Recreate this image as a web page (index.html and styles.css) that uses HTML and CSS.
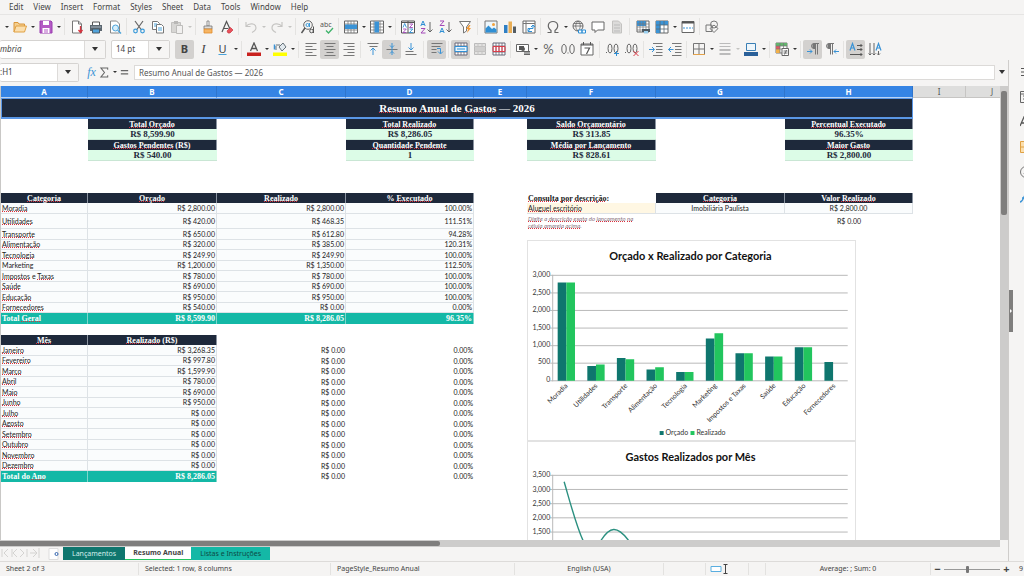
FILE: index.html
```html
<!DOCTYPE html>
<html lang="pt-BR">
<head>
<meta charset="utf-8">
<title>Resumo Anual de Gastos</title>
<link rel="stylesheet" href="styles.css">
</head>
<body>
<div class="app">
  <nav class="menubar">
    <button>Edit</button><button>View</button><button>Insert</button><button>Format</button><button>Styles</button><button>Sheet</button><button>Data</button><button>Tools</button><button>Window</button><button>Help</button>
  </nav>

  <div class="toolbar">
    <button class="dd" aria-label="New options"></button>
    <button class="tb" aria-label="Open"><svg viewBox="0 0 14 14"><path d="M1 12V2.500h4l1 1.500h5.500V6" fill="#f5cf8e" stroke="#d9963a"/><path d="M1 12l2-6h10.500l-2 6z" fill="#fbdfae" stroke="#e0a144"/></svg></button>
    <button class="dd" aria-label="Open options"></button>
    <button class="tb" aria-label="Save"><svg viewBox="0 0 14 14"><path d="M1 1h11l1 1v11H1z" fill="#b45bc4" stroke="#9a3fb0"/><path d="M4 1h6v4H4zM3.500 8h7v5h-7z" fill="#fff"/><path d="M5 10h4M5 12h4" stroke="#b45bc4"/></svg></button>
    <button class="dd" aria-label="Save options"></button><i class="sep"></i>
    <button class="tb" aria-label="Export as PDF"><svg viewBox="0 0 14 14"><path d="M2.500 1h6l3 3v9h-9z" fill="#fff" stroke="#777"/><path d="M8.500 1v3h3" fill="none" stroke="#777"/><path d="M10.500 6v6M8.500 10l2 2.500 2-2.500" fill="none" stroke="#d8333f" stroke-width="1.300"/></svg></button>
    <button class="tb" aria-label="Print"><svg viewBox="0 0 14 14"><path d="M3.500 5V2h7v3" fill="#fff" stroke="#555"/><path d="M1 5h12v6H1z" fill="#5c6770"/><path d="M2 7h10" stroke="#a9b6c0"/><path d="M3.500 9h7v4h-7z" fill="#52a4dc" stroke="#4d5a63"/></svg></button>
    <button class="tb" aria-label="Print Preview"><svg viewBox="0 0 14 14"><path d="M2.500 1h6l3 3v9h-9z" fill="#fff" stroke="#888"/><circle cx="7.500" cy="8" r="3" fill="#d8effb" stroke="#4ba3da"/><path d="M10 10.500l3 3" stroke="#4ba3da" stroke-width="1.400"/></svg></button><i class="sep"></i>
    <button class="tb" aria-label="Cut"><svg viewBox="0 0 14 14" fill="none"><path d="M3 1l6.500 9M11 1L4.500 10" stroke="#666" stroke-width="1.200"/><circle cx="3.500" cy="11" r="1.800" stroke="#3a9ad9" stroke-width="1.200"/><circle cx="10.500" cy="11" r="1.800" stroke="#3a9ad9" stroke-width="1.200"/></svg></button>
    <button class="tb" aria-label="Copy"><svg viewBox="0 0 14 14"><path d="M1.500 1.500h5l2 2v6h-7z" fill="#fff" stroke="#777"/><path d="M5.500 4.500h5l2 2v6.500h-7z" fill="#fff" stroke="#777"/><path d="M3 4h3M3 6h2M7 8h4M7 10h4" stroke="#4ba3da"/></svg></button>
    <button class="tb" aria-label="Paste"><svg viewBox="0 0 14 14"><path d="M1.500 2.500h9v10h-9z" fill="#d7d6d4" stroke="#c2c1bf"/><path d="M4 1h4v3H4z" fill="#b9b8b6"/><path d="M6.500 5.500h6v8h-6z" fill="#f1f0ef" stroke="#bdbcba"/></svg></button>
    <button class="dd off" aria-label="Paste options"></button><i class="sep"></i>
    <button class="tb" aria-label="Clone Formatting"><svg viewBox="0 0 14 14"><path d="M6 1h2v5H6z" fill="#fff" stroke="#777" stroke-width=".8"/><path d="M3 6h8v3H3z" fill="#ddd" stroke="#777" stroke-width=".8"/><path d="M3 9h8v4H3z" fill="#f6b564" stroke="#e08a2a" stroke-width=".8"/></svg></button>
    <button class="tb" aria-label="Clear Direct Formatting"><svg viewBox="0 0 14 14" fill="none"><path d="M2 12L6.500 1.500 10 9M3.500 8.500h5" stroke="#555" stroke-width="1.200"/><path d="M7 11l3.500-3.500L13 10l-3 3H8z" fill="#e8505b" stroke="#c8333e" stroke-width=".7"/></svg></button><i class="sep"></i>
    <button class="tb" aria-label="Undo"><svg viewBox="0 0 14 14" fill="none" stroke="#c6c5c3" stroke-width="1.200"><path d="M2 2v4.500h4.500M2 6.500C5 2.500 12 3 12 8c0 2.500-2 3.500-4 4.500"/></svg></button>
    <button class="dd off" aria-label="Undo options"></button>
    <button class="tb" aria-label="Redo"><svg viewBox="0 0 14 14" fill="none" stroke="#c6c5c3" stroke-width="1.200"><path d="M12 2v4.500H7.500M12 6.500C9 2.500 2 3 2 8c0 2.500 2 3.500 4 4.500"/></svg></button>
    <button class="dd off" aria-label="Redo options"></button><i class="sep"></i>
    <button class="tb" aria-label="Find and Replace"><svg viewBox="0 0 14 14" fill="none"><circle cx="7" cy="5" r="4.300" stroke="#666"/><path d="M4 8l-3.500 5" stroke="#555" stroke-width="1.500"/><circle cx="6.500" cy="5" r="1.500" stroke="#3a9ad9"/><path d="M8.500 3v4" stroke="#3a9ad9"/><circle cx="10.500" cy="11" r="1.800" stroke="#555"/><path d="M12.500 6.500v6.500" stroke="#555"/></svg></button>
    <button class="tb" aria-label="Spelling"><svg viewBox="0 0 14 14" fill="none"><text x="0" y="7" font-size="7" fill="#555">abc</text><path d="M6 10.500l2.500 2.500L13 8" stroke="#3fb36b" stroke-width="1.300"/></svg></button><i class="sep"></i>
    <button class="tb" aria-label="Row"><svg viewBox="0 0 14 14"><path d="M.5 1h13v12H.5z" fill="#fff" stroke="#666"/><path d="M.5 4h13M.5 10h13M4 1v12M7 1v12M10 1v12" stroke="#777" stroke-width=".8"/><path d="M1 4.500h12v4.500H1z" fill="#3a93d6"/></svg></button>
    <button class="dd" aria-label="Row options"></button>
    <button class="tb" aria-label="Column"><svg viewBox="0 0 14 14"><path d="M.5 1h13v12H.5z" fill="#fff" stroke="#666"/><path d="M.5 4h13M.5 7h13M.5 10h13M4 1v12M10 1v12" stroke="#777" stroke-width=".8"/><path d="M4.500 1.500h4.500v11H4.500z" fill="#3a93d6"/></svg></button>
    <button class="dd" aria-label="Column options"></button><i class="sep"></i>
    <button class="tb" aria-label="Sort"><svg viewBox="0 0 14 14" fill="none"><path d="M.5 1h13v12H.5zM7 1v12M.5 2.500h13" fill="#fff" stroke="#555"/><path d="M2 7.500l1.700-4 1.700 4M8.500 9h3.300L8.500 12.500h3.300" stroke="#2f8fd4" stroke-width=".9"/><path d="M2 9h3.300L2 12.500h3.300M8.500 4h3.300L8.500 7.500h3.300" stroke="#a347b8" stroke-width=".9"/></svg></button>
    <button class="tb" aria-label="Sort Ascending"><svg viewBox="0 0 14 14" fill="none"><path d="M.8 6L3 1l2.200 5M1.500 4.500h3" stroke="#2f8fd4"/><path d="M1 8.500h4l-4 4.500h4.500" stroke="#a347b8"/><path d="M10 2v10M7.500 9.500L10 12l2.500-2.500" stroke="#666"/></svg></button>
    <button class="tb" aria-label="Sort Descending"><svg viewBox="0 0 14 14" fill="none"><path d="M1 1h4L1 5.500h4.500" stroke="#a347b8"/><path d="M.8 13L3 8l2.200 5M1.500 11.500h3" stroke="#2f8fd4"/><path d="M10 2v10M7.500 9.500L10 12l2.500-2.500" stroke="#666"/></svg></button>
    <button class="tb" aria-label="AutoFilter"><svg viewBox="0 0 14 14"><path d="M1.500 1.500h11L8.500 7v4l-3 2V7z" fill="#fff" stroke="#777"/><path d="M11 5l-3 4h2l-1 4 4-5h-2l1.500-3z" fill="#f29a38"/></svg></button><i class="sep wide"></i>
    <button class="tb" aria-label="Insert Image"><svg viewBox="0 0 14 14"><path d="M1 1h12v12H1z" fill="#eef7fc" stroke="#777"/><circle cx="9.500" cy="4.500" r="1.500" fill="#f2a13c"/><path d="M1.500 12.500v-4l3-3 3.500 3.500 2-1.500 2.500 2v3z" fill="#2f8fd4"/></svg></button>
    <button class="tb" aria-label="Insert Chart"><svg viewBox="0 0 14 14"><path d="M1 5h3.500v8H1z" fill="#2f7fc4"/><path d="M5.500 1.500H9V13H5.500z" fill="#e9ae55"/><path d="M10 6.500h3V13h-3z" fill="#555d63"/></svg></button>
    <button class="tb" aria-label="Insert Pivot Table"><svg viewBox="0 0 14 14" fill="none"><path d="M1 1h12v12H1z" fill="#fff" stroke="#666"/><path d="M1 3.500h12M4 1v12" stroke="#777"/><path d="M6 11V8.500h5V5.500M9 7l2-2 2 2M8 9l-2 2.500h4" stroke="#2f8fd4"/></svg></button><i class="sep"></i>
    <button class="tb" aria-label="Special Character"><svg viewBox="0 0 14 14" fill="none" stroke="#666" stroke-width="1.200"><path d="M1.500 12.500h3.500v-2C.5 7 2 1.500 7 1.500s6.500 5.500 2 9v2h3.500"/></svg></button>
    <button class="dd" aria-label="Special Character options"></button>
    <button class="tb" aria-label="Hyperlink"><svg viewBox="0 0 14 14" fill="none"><circle cx="6" cy="6" r="5" stroke="#666"/><path d="M1 6h10M6 1C3 4 3 8 6 11M6 1c3 3 3 7 0 10M2 3.500h8" stroke="#666" stroke-width=".8"/><path d="M6.500 10h3.500v3H6.500zM10 10h3.500v3H10z" fill="#fff" stroke="#2f8fd4"/></svg></button>
    <button class="tb" aria-label="Insert Comment"><svg viewBox="0 0 14 14"><path d="M1 2h12v8H6.500L4 12.500V10H1z" fill="#fff" stroke="#666"/></svg></button>
    <button class="tb" aria-label="Headers and Footers"><svg viewBox="0 0 14 14"><path d="M2.500 1h6l3 3v9h-9z" fill="#dcdbda" stroke="#c3c2c0"/><path d="M4 5h6M4 8h6M4 11h6" stroke="#bbb"/></svg></button><i class="sep wide"></i>
    <button class="tb" aria-label="Define Print Area"><svg viewBox="0 0 14 14"><path d="M1 1h12v11H1z" fill="#fff" stroke="#666"/><path d="M1 1h9v5H1z" fill="#3a93d6"/><path d="M1 4h12M1 7h12M1 10h12M4 1v11M7 1v11M10 1v11" stroke="#777" stroke-width=".7"/><path d="M6 9h8v3H6z" fill="#4d5a63"/><path d="M8 11h4v2.500H8z" fill="#9bd0ef"/></svg></button>
    <button class="tb" aria-label="Freeze Rows and Columns"><svg viewBox="0 0 14 14"><path d="M1 1h12v12H1z" fill="#fff" stroke="#666"/><path d="M1 1h12v4H1zM1 1h4.500v12H1z" fill="#3a93d6"/><path d="M1 5h12M1 9h12M5 1v12M9 1v12" stroke="#5a6a75" stroke-width=".8"/></svg></button>
    <button class="dd" aria-label="Freeze options"></button>
    <button class="tb" aria-label="Split Window"><svg viewBox="0 0 14 14"><path d="M1 1.500h12v11H1z" fill="#fff" stroke="#666"/><path d="M1 2.500h12" stroke="#555" stroke-width="2"/><path d="M2 8h10" stroke="#3a93d6" stroke-dasharray="2 1"/></svg></button><i class="sep"></i>
    <button class="tb" aria-label="Show Draw Functions"><svg viewBox="0 0 14 14" fill="none" stroke="#777"><path d="M1 5h6v6.500H1z"/><circle cx="9" cy="4.500" r="3.500"/><path d="M9 5l4 3.500-4 4-4-4z"/></svg></button>
  </div>

  <div class="toolbar format">
    <div class="combo font"><input aria-label="Font Name" value="mbria" class="italic"><button aria-label="Font list"></button></div>
    <div class="combo size"><input aria-label="Font Size" value="14 pt"><button aria-label="Size list"></button></div>
    <button class="tb on" aria-label="Bold"><b class="glyph">B</b></button>
    <button class="tb" aria-label="Italic"><em class="glyph serif">I</em></button>
    <button class="tb" aria-label="Underline"><u class="glyph under">U</u></button>
    <button class="dd" aria-label="Underline options"></button><i class="sep"></i>
    <button class="tb" aria-label="Font Color"><svg viewBox="0 0 14 14"><path d="M3.500 9L7 1l3.500 8M5 6.500h4" fill="none" stroke="#555" stroke-width="1.300"/><path d="M0 10.500h14V14H0z" fill="#c9211e"/></svg></button>
    <button class="dd" aria-label="Font Color options"></button>
    <button class="tb" aria-label="Background Color"><svg viewBox="0 0 14 14"><path d="M3 4v4M3 3h4M10 1L6 5l3 4 4-4z" fill="#e2e9ee" stroke="#66727a"/><path d="M1.500 2.500v5" stroke="#3a93d6" stroke-width="1.500"/><path d="M0 10.500h14V14H0z" fill="#ffff00"/></svg></button>
    <button class="dd" aria-label="Background Color options"></button><i class="sep"></i>
    <button class="tb" aria-label="Align Left"><svg viewBox="0 0 14 14" stroke="#777"><path d="M1.500 1.500h11M1.500 4.500h7M1.500 7.500h11M1.500 10.500h7M1.500 13.500h11"/></svg></button>
    <button class="tb on" aria-label="Center"><svg viewBox="0 0 14 14" stroke="#777"><path d="M1.500 1.500h11M3.500 4.500h7M1.500 7.500h11M3.500 10.500h7M1.500 13.500h11"/></svg></button>
    <button class="tb" aria-label="Align Right"><svg viewBox="0 0 14 14" stroke="#777"><path d="M1.500 1.500h11M5.500 4.500h7M1.500 7.500h11M5.500 10.500h7M1.500 13.500h11"/></svg></button><i class="sep"></i>
    <button class="tb" aria-label="Align Top"><svg viewBox="0 0 14 14" fill="none" stroke="#777"><path d="M1.500 1.500h11M3.500 4.500h8"/><path d="M7 13V6M4.500 8.500L7 6l2.500 2.500" stroke="#3a93d6"/></svg></button>
    <button class="tb on" aria-label="Center Vertically"><svg viewBox="0 0 14 14" fill="none" stroke="#777"><path d="M1.500 7.500h11"/><path d="M7 1v12M5 3.500l2 2 2-2M5 11.500l2-2 2 2" stroke="#3a93d6"/></svg></button>
    <button class="tb" aria-label="Align Bottom"><svg viewBox="0 0 14 14" fill="none" stroke="#777"><path d="M1.500 12.500h11M1.500 9.500h8"/><path d="M7 1v7M4.500 5.500L7 8l2.500-2.500" stroke="#3a93d6"/></svg></button><i class="sep wide"></i>
    <button class="tb on" aria-label="Wrap Text"><svg viewBox="0 0 14 14" fill="none" stroke="#777"><path d="M1.500 1.500h11M1.500 4.500h9M1.500 7.500h5M1.500 10.500h5"/><path d="M7 6.500h3.500v5M8 9.500l2.500 2.500L13 9.500" stroke="#3a93d6"/></svg></button><i class="sep"></i>
    <button class="tb on" aria-label="Merge and Center Cells"><svg viewBox="0 0 14 14" fill="none"><path d="M1 1h12v12H1z" fill="#fff" stroke="#667"/><path d="M1 4h12M1 10h12M4 1v12M10 1v12M7 1v3M7 10v3" stroke="#667" stroke-width=".8"/><path d="M1 4.500h12v5H1z" fill="#eaf6fd" stroke="#2f8fd4"/><path d="M3 7h8" stroke="#2f8fd4"/></svg></button>
    <button class="tb" aria-label="Merge Cells"><svg viewBox="0 0 14 14" fill="none"><path d="M1.500 1.500h11v11h-11z" fill="#e2e1e0" stroke="#bbb"/><path d="M1 4.500h12M1 9.500h12M5 1v12M9 1v12" stroke="#c4c3c2"/><path d="M2 5h10v4H2z" fill="#d0cfce"/></svg></button>
    <button class="tb" aria-label="Unmerge Cells"><svg viewBox="0 0 14 14" fill="none"><path d="M1 1h12v12H1z" fill="#fff" stroke="#667"/><path d="M4 1v12M7 1v12M10 1v12M1 4h12M1 10h12" stroke="#667" stroke-width=".8"/><path d="M1 4.500h12v5H1zM4 4.500v5M7 4.500v5M10 4.500v5" stroke="#dc3c48"/></svg></button><i class="sep"></i>
    <button class="tb" aria-label="Format as Currency"><svg viewBox="0 0 14 14"><path d="M.5 2.500h12v7H.5z" fill="#fff" stroke="#666"/><path d="M3 4h5v4H3z" fill="#555"/><circle cx="7" cy="7" r="2" fill="#555"/><path d="M8 9h6v4H8z" fill="#666"/><path d="M8 11h6" stroke="#ddd"/></svg></button>
    <button class="dd" aria-label="Currency options"></button>
    <button class="tb" aria-label="Format as Percent"><span class="glyph num">%</span></button>
    <button class="tb" aria-label="Format as Number"><svg viewBox="0 0 14 14" fill="none" stroke="#666"><ellipse cx="3" cy="7" rx="2.200" ry="4.500"/><ellipse cx="11" cy="7" rx="2.200" ry="4.500"/><path d="M6.500 11h1"/></svg></button>
    <button class="tb" aria-label="Format as Date"><svg viewBox="0 0 14 14"><path d="M1 2h12v11H1z" fill="#fff" stroke="#666"/><path d="M1 3h12M3.500 0v3M10.500 0v3" stroke="#555"/><path d="M4.500 6h5L6.500 12" fill="none" stroke="#555" stroke-width="1.200"/></svg></button><i class="sep wide"></i>
    <button class="tb" aria-label="Add Decimal Place"><svg viewBox="0 0 14 14" fill="none" stroke="#666"><path d="M0 10.500h1"/><ellipse cx="4" cy="6.500" rx="2" ry="4.500"/><ellipse cx="10" cy="6.500" rx="2" ry="4.500"/><path d="M8 11.500h5M10.500 9v5" stroke="#2f8fd4"/></svg></button>
    <button class="tb" aria-label="Delete Decimal Place"><svg viewBox="0 0 14 14" fill="none" stroke="#666"><path d="M0 10.500h1"/><ellipse cx="4" cy="6.500" rx="2" ry="4.500"/><ellipse cx="10" cy="6.500" rx="2" ry="4.500"/><path d="M8.500 9l5 5M13.500 9l-5 5" stroke="#dc3c48"/></svg></button><i class="sep"></i>
    <button class="tb" aria-label="Increase Indent"><svg viewBox="0 0 14 14" fill="none" stroke="#777"><path d="M4 1.500h9.500M7 4.500h6.500M7 7.500h6.500M7 10.500h6.500M4 13.500h9.500"/><path d="M0 7.500h5M3 5l2.500 2.500L3 10" stroke="#3a93d6"/></svg></button>
    <button class="tb" aria-label="Decrease Indent"><svg viewBox="0 0 14 14" fill="none" stroke="#777"><path d="M4 1.500h9.500M7 4.500h6.500M7 7.500h6.500M7 10.500h6.500M4 13.500h9.500"/><path d="M.5 7.500h5M3 5L.5 7.500 3 10" stroke="#3a93d6"/></svg></button><i class="sep"></i>
    <button class="tb" aria-label="Borders"><svg viewBox="0 0 14 14" fill="none"><path d="M1.500 12.500v-11h11v11M7 1.500v11M1.500 7h11" stroke="#777"/><path d="M1 12.500h12" stroke="#e3a24a"/></svg></button>
    <button class="dd" aria-label="Borders options"></button>
    <button class="tb" aria-label="Border Style"><svg viewBox="0 0 14 14" stroke="#bbb"><path d="M1.500 1.500h11M1.500 4.500h11"/><path d="M1.500 8h11M1.500 12h11" stroke-width="2"/></svg></button>
    <button class="dd off" aria-label="Border Style options"></button>
    <button class="tb" aria-label="Border Color"><svg viewBox="0 0 14 14"><path d="M2.500 1.500h9v7h-9z" fill="#eef6fb" stroke="#3a7fb5"/><path d="M0 10h14v4H0z" fill="#2a6099"/></svg></button>
    <button class="dd" aria-label="Border Color options"></button><i class="sep"></i>
    <button class="tb" aria-label="Conditional"><svg viewBox="0 0 14 14"><path d="M1 1h11v10H1z" fill="#fff" stroke="#777"/><path d="M1 1h11v3H1z" fill="#63b56d"/><path d="M1 4h4v3H1z" fill="#e05a64"/><path d="M1 7h4v4H1z" fill="#f1b04a"/><path d="M1 4h11M1 7h11M5 1v10M8.500 1v10" stroke="#777" stroke-width=".7"/><path d="M7 6.500h6.500v7H7z" fill="#fff" stroke="#666"/><path d="M8.500 9h4M8.500 11h4M11.500 8l-2 4.500" stroke="#555" stroke-width=".8"/></svg></button>
    <button class="dd" aria-label="Conditional options"></button><i class="sep"></i>
    <button class="tb on" aria-label="Left-To-Right"><svg viewBox="0 0 14 14" fill="none" stroke="#777"><path d="M13 1.500H8a2.500 2.500 0 000 5h1M9.500 1.500v11M11.500 1.500v11"/><path d="M7 2h2v4H7z" fill="#777"/><path d="M1 9.500h5M4 7.500l2 2-2 2" stroke="#3a93d6"/></svg></button>
    <button class="tb" aria-label="Right-To-Left"><svg viewBox="0 0 14 14" fill="none" stroke="#777"><path d="M9 1.500H4a2.500 2.500 0 000 5h1M5.500 1.500v11M7.500 1.500v11"/><path d="M3 2h2v4H3z" fill="#777"/><path d="M14 9.500H9M11 7.500l-2 2 2 2" stroke="#3a93d6"/></svg></button><i class="sep"></i>
    <button class="tb on" aria-label="Text direction left to right"><svg viewBox="0 0 14 14" fill="none" stroke="#555"><path d="M1 8.500l2.500-7 2.500 7M2 6h3" stroke="#3a93d6" stroke-width="1.200"/><path d="M8 3.500h5M8 7.500h5M1 12.500h12M11.500 2L13 3.500 11.500 5M11.500 6L13 7.500 11.500 9M11.500 11l1.500 1.500-1.500 1.500"/></svg></button>
    <button class="tb" aria-label="Text direction top to bottom"><svg viewBox="0 0 14 14" fill="none" stroke="#666"><path d="M2 1v12M6 1v12M10.500 9v4M.5 11.500L2 13l1.500-1.500M4.500 11.500L6 13l1.500-1.500M9 11.500l1.500 1.500 1.500-1.500"/><path d="M8 8.500l2.500-7 2.500 7M9 6h3" stroke="#3a93d6" stroke-width="1.200"/></svg></button>
  </div>

  <div class="middle">
    <div class="work">
      <div class="formulabar">
        <div class="combo name"><input aria-label="Name Box" value=":H1"><button aria-label="Name list"></button></div>
        <button class="fb fx" aria-label="Function Wizard"><i>fx</i></button>
        <button class="fb" aria-label="Select Function"><svg viewBox="0 0 12 12" fill="none" stroke="#666" stroke-width="1.100"><path d="M9.500 3V1H2l4 5-4 5h7.500V9"/></svg></button>
        <button class="dd" aria-label="Function options"></button>
        <button class="fb eq" aria-label="Formula"><svg viewBox="0 0 12 12" stroke="#666" stroke-width="1.300"><path d="M2 4h8M2 7.500h8"/></svg></button>
        <input class="line" aria-label="Input line" value="Resumo Anual de Gastos — 2026">
        <button class="dd big" aria-label="Expand Formula Bar"></button>
      </div>

      <div class="pane">
        <div class="sheet">
          <table class="cells">
            <colgroup><col class="ca"><col class="cw"><col class="cw"><col class="cm"><col class="cn"><col class="cw"><col class="cw"><col class="cm"><col class="cn"><col class="cn"></colgroup>
            <thead><tr><th>A</th><th>B</th><th>C</th><th>D</th><th>E</th><th>F</th><th>G</th><th>H</th><th class="plain">I</th><th class="plain">J</th></tr></thead>
            <tbody class="titlerow"><tr><td colspan="8"><s>Resumo</s> <s>Anual</s> de <s>Gastos</s> — 2026</td><td></td><td></td></tr></tbody>
            <tbody>
              <tr><td></td><td class="hd"><s>Total</s> <s>Orçado</s></td><td></td><td class="hd"><s>Total</s> <s>Realizado</s></td><td></td><td class="hd"><s>Saldo</s> <s>Orçamentário</s></td><td></td><td class="hd"><s>Percentual</s> <s>Executado</s></td></tr>
              <tr><td></td><td class="kpi">R$ 8,599.90</td><td></td><td class="kpi">R$ 8,286.05</td><td></td><td class="kpi">R$ 313.85</td><td></td><td class="kpi">96.35%</td></tr>
              <tr><td></td><td class="hd"><s>Gastos</s> <s>Pendentes</s> (R$)</td><td></td><td class="hd"><s>Quantidade</s> <s>Pendente</s></td><td></td><td class="hd"><s>Média</s> <s>por</s> <s>Lançamento</s></td><td></td><td class="hd"><s>Maior</s> <s>Gasto</s></td></tr>
              <tr><td></td><td class="kpi">R$ 540.00</td><td></td><td class="kpi">1</td><td></td><td class="kpi">R$ 828.61</td><td></td><td class="kpi">R$ 2,800.00</td></tr>
              <tr><td></td></tr><tr><td></td></tr><tr class="spacer"><td></td></tr>
            </tbody>
            <tbody>
              <tr><td class="hd"><s>Categoria</s></td><td class="hd"><s>Orçado</s></td><td class="hd"><s>Realizado</s></td><td class="hd">% <s>Executado</s></td><td></td><td class="ask"><s>Consulta</s> <s>por</s> <s>descrição</s>:</td><td class="hd"><s>Categoria</s></td><td class="hd">Valor <s>Realizado</s></td></tr>
              <tr><td class="c"><s>Moradia</s></td><td class="c n">R$ 2,800.00</td><td class="c n">R$ 2,800.00</td><td class="c n">100.00%</td><td></td><td class="c key"><s>Aluguel</s> <s>escritório</s></td><td class="c m">Imobiliária Paulista</td><td class="c m">R$ 2,800.00</td></tr>
              <tr class="tall"><td class="c"><s>Utilidades</s></td><td class="c n">R$ 420.00</td><td class="c n">R$ 468.35</td><td class="c n">111.51%</td><td></td><td class="hint"><s>Digite</s> a <s>descrição</s> <s>exata</s> do <s>lançamento</s> <s>na</s> <s>célula</s> <s>amarela</s> <s>acima</s>.</td><td></td><td class="m">R$ 0.00</td></tr>
              <tr><td class="c"><s>Transporte</s></td><td class="c n">R$ 650.00</td><td class="c n">R$ 612.80</td><td class="c n">94.28%</td></tr>
              <tr><td class="c"><s>Alimentação</s></td><td class="c n">R$ 320.00</td><td class="c n">R$ 385.00</td><td class="c n">120.31%</td></tr>
              <tr><td class="c"><s>Tecnologia</s></td><td class="c n">R$ 249.90</td><td class="c n">R$ 249.90</td><td class="c n">100.00%</td></tr>
              <tr><td class="c">Marketing</td><td class="c n">R$ 1,200.00</td><td class="c n">R$ 1,350.00</td><td class="c n">112.50%</td></tr>
              <tr><td class="c"><s>Impostos</s> e <s>Taxas</s></td><td class="c n">R$ 780.00</td><td class="c n">R$ 780.00</td><td class="c n">100.00%</td></tr>
              <tr><td class="c"><s>Saúde</s></td><td class="c n">R$ 690.00</td><td class="c n">R$ 690.00</td><td class="c n">100.00%</td></tr>
              <tr><td class="c"><s>Educação</s></td><td class="c n">R$ 950.00</td><td class="c n">R$ 950.00</td><td class="c n">100.00%</td></tr>
              <tr><td class="c"><s>Fornecedores</s></td><td class="c n">R$ 540.00</td><td class="c n">R$ 0.00</td><td class="c n">0.00%</td></tr>
              <tr><td class="tot">Total <s>Geral</s></td><td class="tot n">R$ 8,599.90</td><td class="tot n">R$ 8,286.05</td><td class="tot n">96.35%</td></tr>
              <tr class="spacer"><td></td></tr>
            </tbody>
            <tbody>
              <tr><td class="hd"><s>Mês</s></td><td class="hd"><s>Realizado</s> (R$)</td></tr>
              <tr><td class="c"><s>Janeiro</s></td><td class="c n">R$ 3,268.35</td><td class="n">R$ 0.00</td><td class="n">0.00%</td></tr>
              <tr><td class="c"><s>Fevereiro</s></td><td class="c n">R$ 997.80</td><td class="n">R$ 0.00</td><td class="n">0.00%</td></tr>
              <tr><td class="c"><s>Março</s></td><td class="c n">R$ 1,599.90</td><td class="n">R$ 0.00</td><td class="n">0.00%</td></tr>
              <tr><td class="c"><s>Abril</s></td><td class="c n">R$ 780.00</td><td class="n">R$ 0.00</td><td class="n">0.00%</td></tr>
              <tr><td class="c"><s>Maio</s></td><td class="c n">R$ 690.00</td><td class="n">R$ 0.00</td><td class="n">0.00%</td></tr>
              <tr><td class="c"><s>Junho</s></td><td class="c n">R$ 950.00</td><td class="n">R$ 0.00</td><td class="n">0.00%</td></tr>
              <tr><td class="c"><s>Julho</s></td><td class="c n">R$ 0.00</td><td class="n">R$ 0.00</td><td class="n">0.00%</td></tr>
              <tr><td class="c"><s>Agosto</s></td><td class="c n">R$ 0.00</td><td class="n">R$ 0.00</td><td class="n">0.00%</td></tr>
              <tr><td class="c"><s>Setembro</s></td><td class="c n">R$ 0.00</td><td class="n">R$ 0.00</td><td class="n">0.00%</td></tr>
              <tr><td class="c"><s>Outubro</s></td><td class="c n">R$ 0.00</td><td class="n">R$ 0.00</td><td class="n">0.00%</td></tr>
              <tr><td class="c"><s>Novembro</s></td><td class="c n">R$ 0.00</td><td class="n">R$ 0.00</td><td class="n">0.00%</td></tr>
              <tr><td class="c"><s>Dezembro</s></td><td class="c n">R$ 0.00</td><td class="n">R$ 0.00</td><td class="n">0.00%</td></tr>
              <tr class="spacer"><td class="tot">Total do <s>Ano</s></td><td class="tot n">R$ 8,286.05</td><td class="n">R$ 0.00</td><td class="n">0.00%</td></tr>
            </tbody>
          </table>

          <div class="charts">
            <svg class="chart" viewBox="0 0 328 200" role="img" aria-label="Orçado x Realizado por Categoria">
              <text class="ct" x="163" y="19">Orçado x Realizado por Categoria</text>
              <path class="grid" d="M22 34.500h299M22 52.200h299M22 69.800h299M22 87.500h299M22 105.200h299M22 122.800h299M22 140.500h299M24.500 34v107"/>
              <g class="ax"><text x="22" y="36">3,000</text><text x="22" y="54">2,500</text><text x="22" y="71">2,000</text><text x="22" y="89">1,500</text><text x="22" y="107">1,000</text><text x="22" y="124">500</text><text x="22" y="142">0</text></g>
              <path fill="#0f766e" d="M29.500 140.500v-98.900h8.700v98.900zM59.300 140.500v-14.800h8.700v14.800zM89 140.500v-23h8.700v23zM118.800 140.500v-11.300h8.700v11.300zM148.600 140.500v-8.800h8.700v8.800zM178.400 140.500v-42.400h8.700v42.400zM208.200 140.500v-27.600h8.700v27.600zM238 140.500v-24.400h8.700v24.400zM267.800 140.500v-33.600h8.700v33.600zM297.600 140.500v-19h8.700v19z"/>
              <path fill="#22c55e" d="M38.200 140.500v-98.900h8.700v98.900zM68 140.500v-16.500h8.700v16.500zM97.700 140.500v-21.600h8.700v21.600zM127.500 140.500v-13.600h8.700v13.600zM157.300 140.500v-8.800h8.700v8.800zM187.100 140.500v-47.700h8.700v47.700zM216.900 140.500v-27.600h8.700v27.600zM246.700 140.500v-24.400h8.700v24.400zM276.500 140.500v-33.600h8.700v33.600z"/>
              <g class="ax"><text transform="translate(40 146) rotate(-45)">Moradia</text><text transform="translate(70 146) rotate(-45)">Utilidades</text><text transform="translate(100 146) rotate(-45)">Transporte</text><text transform="translate(130 146) rotate(-45)">Alimentação</text><text transform="translate(160 146) rotate(-45)">Tecnologia</text><text transform="translate(190 146) rotate(-45)">Marketing</text><text transform="translate(219 146) rotate(-45)">Impostos e Taxas</text><text transform="translate(249 146) rotate(-45)">Saúde</text><text transform="translate(279 146) rotate(-45)">Educação</text><text transform="translate(309 146) rotate(-45)">Fornecedores</text></g>
              <path fill="#0f766e" d="M132 191h4v4h-4z"/><path fill="#22c55e" d="M163 191h4v4h-4z"/>
              <g class="lg"><text x="138" y="195">Orçado</text><text x="169" y="195">Realizado</text></g>
            </svg>
            <svg class="chart" viewBox="0 0 328 200" role="img" aria-label="Gastos Realizados por Mês">
              <text class="ct" x="163" y="19">Gastos Realizados por Mês</text>
              <path class="grid" d="M22 33.500h299M22 47.700h299M22 62h299M22 76.200h299M22 90.500h299M22 104.700h299M24.500 33v107"/>
              <g class="ax"><text x="22" y="35">3,500</text><text x="22" y="50">3,000</text><text x="22" y="64">2,500</text><text x="22" y="78">2,000</text><text x="22" y="92">1,500</text></g>
              <path d="M36 40C41 57 48 84 55 99C62 112 67 108 73 99C82 85 89 84 100 98L106 106" fill="none" stroke="#2b9080" stroke-width="1.400"/>
            </svg>
          </div>
        </div>
        <div class="vscroll"><div class="vthumb"></div></div>
      </div>

      <div class="hscroll"><div class="hthumb"></div></div>
      <div class="tabs">
        <div class="nav"><svg viewBox="0 0 42 12" fill="none" stroke="#d4d3d1"><path d="M2 2v8M8 2L4 6l4 4M12 2v8M17 2l-4 4 4 4M20 2l4 4-4 4M27 2v8M30 6h7M33 2l4 4-4 4M39 1v10"/></svg></div>
        <button class="add" aria-label="Add Sheet"><svg viewBox="0 0 12 12"><path d="M1 .5h9v11H1z" fill="#fff" stroke="#ddd"/><circle cx="8.500" cy="6" r="1.500" fill="none" stroke="#3566b0"/></svg></button>
        <button class="tab t1">Lançamentos</button><button class="tab t2">Resumo Anual</button><button class="tab t3">Listas e Instruções</button>
      </div>
    </div>

    <aside class="sidebar">
      <button class="handle" aria-label="Hide sidebar"></button>
      <svg viewBox="0 0 12 12" stroke="#555" stroke-width="1.200"><path d="M1 2.500h9M1 6h9M1 9.500h9"/></svg>
      <svg viewBox="0 0 12 12" fill="none" stroke="#666"><path d="M.5.500h11v11H.5zM.5 3h11M3 5h2M3 8h2"/></svg>
      <svg viewBox="0 0 12 12" fill="none" stroke="#555" stroke-width="1.300"><path d="M0 10L4 1l4 9M1.500 7h5"/></svg>
      <svg viewBox="0 0 12 12" fill="#fbdfae" stroke="#e0a144"><path d="M.5.500h10v11H.5zM.5 6h10"/></svg>
      <svg viewBox="0 0 12 12" fill="none" stroke="#777"><circle cx="6" cy="6" r="5.500"/><path d="M8 4L5 5 4 8l3-1z"/></svg>
      <svg viewBox="0 0 12 12" fill="none" stroke="#3a93d6" stroke-width="1.300"><path d="M0 11c4 0 3-8 7-8M2 7h5"/></svg>
    </aside>
  </div>

  <footer class="status">
    <span>Sheet 2 of 3</span><span>Selected: 1 row, 8 columns</span><span>PageStyle_Resumo Anual</span><span class="mid">English (USA)</span><span></span>
    <span class="sel"><svg viewBox="0 0 22 12" fill="none"><path d="M1 3.500h10v5H1z" fill="#fff" stroke="#5aaee0"/><path d="M13.500 1.500h4M13.500 10.500h4M15.500 1.500v9" stroke="#444"/></svg></span>
    <span></span><span class="mid">Average: ; Sum: 0</span>
    <span class="zoom"><button aria-label="Zoom out">−</button><input type="range" aria-label="Zoom" min="0" max="100" value="42"><button aria-label="Zoom in">+</button></span><span class="pct">9</span>
  </footer>
</div>
</body>
</html>
```
FILE: styles.css
```css
* { box-sizing: border-box; }
body { margin: 0; }
.app {
  height: 100vh; display: flex; flex-direction: column; overflow: hidden;
  background: #f5f4f3; color: #444; font: 8px/12px "Noto Sans", sans-serif;
}
button, input { font: inherit; color: inherit; border: 0; padding: 0; margin: 0; background: none; min-width: 0; border-radius: 0; }
svg { display: block; }

.menubar { display: flex; gap: 10px; padding: 1px 9px; border-bottom: 1px solid #e6e5e4; flex: none; }

.toolbar { display: flex; align-items: center; height: 23px; padding-left: 3px; flex: none; white-space: nowrap; }
.toolbar.format { padding-left: 0; height: 22px; }
.tb { width: 19px; height: 19px; flex: none; display: grid; place-items: center; border-radius: 2px; }
.tb svg { width: 14px; height: 14px; }
.tb.on { background: #d3d1cf; }
.sep { width: 5px; height: 17px; flex: none; background: linear-gradient(#e4e3e1, #e4e3e1) center / 1px 100% no-repeat; }
.sep.wide { width: 7px; }
.dd { width: 7px; height: 19px; flex: none; display: grid; place-items: center; }
.dd::before { content: ""; border: 2px solid transparent; border-top-color: #333; border-bottom: 0; }
.dd.off::before { border-top-color: #c4c3c1; }
.dd.big { width: 13px; }
.dd.big::before, .combo button::before { content: ""; border: 3px solid transparent; border-top: 4px solid #333; border-bottom: 0; }
.glyph { font-size: 11px; line-height: 14px; color: #444; }
.glyph.serif { font-family: "Liberation Serif", serif; font-size: 13px; }
.glyph.under { text-decoration-color: #4ba3da; }
.glyph.num { font-family: Lato, sans-serif; font-size: 13px; color: #666; }

.combo { display: flex; height: 19px; border: 1px solid #d5d3d1; border-radius: 2px; background: #fff; flex: none; }
.combo input { flex: 1; }
.combo button { width: 21px; border-left: 1px solid #dddbd9; background: #f6f5f4; display: grid; place-items: center; }
.font { width: 106px; border-left: 0; margin-right: 5px; }
.size { width: 59px; padding-left: 4px; margin-right: 5px; }
.italic { font-style: italic; }

.middle { flex: 1; min-height: 0; display: flex; }
.work { flex: 1; min-width: 0; display: flex; flex-direction: column; }
.formulabar { display: flex; align-items: center; height: 26px; padding-bottom: 2px; flex: none; }
.name { width: 79px; border-left: 0; margin-right: 6px; }
.fb { width: 13px; height: 14px; display: grid; place-items: center; }
.fb svg { width: 11px; height: 11px; }
.fx { font-family: "Liberation Serif", serif; font-size: 12px; color: #3a93d6; }
.line { flex: 1; height: 15px; margin-left: 3px; border: 1px solid #dcdad8; background: #fff; padding: 0 4px; color: #555; }

.pane { flex: 1; min-height: 0; display: flex; background: #fff; border-left: 1px solid #c9c8c6; }
.sheet { flex: 1; min-width: 0; overflow: hidden; position: relative; }
.cells { width: 1018px; table-layout: fixed; border-collapse: separate; border-spacing: 0; font: 7px/9px Lato, sans-serif; color: #222; }
.ca { width: 87px; }
.cw { width: 129px; }
.cm { width: 128px; }
.cn { width: 53px; }
.cells th, .cells td { padding: 0 1px; white-space: nowrap; vertical-align: middle; }
.cells thead th { height: 12px; background: #3584e4; color: #fff; font: bold 8px/10px "Noto Sans", sans-serif; border-right: 1px solid #2f75cc; border-bottom: 1px solid #b9d3f5; }
.cells thead .plain { background: #dededd; color: #555; font-weight: normal; border-color: #c6c5c3; }
.cells tbody tr { height: 11px; }
.cells tbody tr:nth-child(odd) { height: 10px; }
.cells tbody tr.spacer { height: 11px; }
.cells tbody tr.tall { height: 15px; }
.cells .titlerow td { height: 21px; font: bold 11px/16px "Liberation Serif", serif; text-align: center; }
.cells .titlerow td:first-child { background: #1e293b; color: #fff; border: 1px solid #5a97e6; border-bottom-width: 2px; }
.cells s { text-decoration: underline dotted #d9303c 1px; text-underline-offset: 0; text-decoration-skip-ink: none; }
.cells .hd, .cells .kpi, .cells .tot { font: bold 8px/9px "Liberation Serif", serif; }
.cells .hd { background: #1e293b; color: #fff; text-align: center; border-right: 1px solid #8a93a0; }
.cells .kpi { background: #dcfce7; color: #1e293b; text-align: center; font-size: 9px; border-bottom: 1px solid #c9e6d4; }
.cells .tot { background: #14b8a6; color: #fff; border-right: 1px solid #7fd6cb; }
.cells .c { background: #fafcfd; border-right: 1px solid #dde2e6; border-bottom: 1px solid #dde2e6; }
.cells .n { text-align: right; }
.cells .m { text-align: center; }
.cells .key { background: #fff7e3; }
.cells .ask { font: bold 8px/9px "Liberation Serif", serif; }
.cells .hint { font: italic 6px/7px Lato, sans-serif; color: #8a7480; white-space: normal; padding-right: 10px; }

.charts { position: absolute; left: 526px; top: 154px; width: 329px; }
.chart { width: 100%; height: 201px; background: #fff; border: 1px solid #e2e2e2; font-family: Lato, sans-serif; }
.ct { font-size: 11px; font-weight: bold; text-anchor: middle; fill: #111; }
.grid { stroke: #b8b8b8; fill: none; }
.ax { font-size: 7px; text-anchor: end; fill: #333; }
.lg { font-size: 7px; fill: #333; }

.vscroll { width: 8px; background: #cdcccb; padding: 5px 1px; }
.vthumb { height: 28%; background: #7f7e7d; border-radius: 2px; }
.hscroll { height: 7px; margin-right: 8px; background: #cdcccb; flex: none; padding: 1px 0; }
.hthumb { width: 44%; height: 5px; background: #7f7e7d; border-radius: 0 2px 2px 0; }
.tabs { display: flex; height: 14px; flex: none; padding-bottom: 1px; font-size: 7px; }
.nav { width: 48px; }
.nav svg { width: 42px; height: 12px; }
.add { width: 15px; }
.add svg { width: 12px; height: 12px; }
.tab { padding: 0 9px; }
.t1 { background: #0f766e; color: #d5efec; }
.t2 { background: #fff; font-weight: bold; border-bottom: 1px solid #22c55e; padding: 0 8px; }
.t3 { background: #14b8a6; color: #0d4a45; }

.sidebar { width: 16px; border-left: 1px solid #cfcdcb; flex: none; padding: 6px 0 0 11px; display: flex; flex-direction: column; gap: 13px; overflow: hidden; position: relative; }
.sidebar > svg { width: 12px; height: 12px; flex: none; }
.handle { position: absolute; left: 0; top: 46%; width: 4px; height: 42px; background: #7f7e7d; display: grid; place-items: center; }
.handle::before { content: ""; border: 2px solid transparent; border-left-color: #fff; border-right: 0; }

.status { display: grid; grid-template-columns: 139fr 192fr 184fr 149fr 42fr 43fr 17fr 165fr 82fr 11fr; height: 15px; flex: none; border-top: 1px solid #dddbd9; align-items: center; white-space: nowrap; font-size: 7px; }
.status > span { padding-left: 6px; min-width: 0; height: 12px; border-right: 1px solid #e3e2e0; }
.status > .mid { padding: 0; text-align: center; }
.status > .sel { padding-left: 4px; }
.sel svg { width: 22px; height: 12px; }
.status > .zoom { display: flex; align-items: center; gap: 2px; padding: 0 2px; border: 0; }
.status > .pct { padding: 0 0 0 6px; border: 0; }
.zoom button { width: 9px; font-size: 11px; font-weight: bold; }
.zoom input { appearance: none; flex: 1; height: 8px; background: linear-gradient(#999, #999) center / 100% 1px no-repeat; }
.zoom input::-webkit-slider-thumb { appearance: none; width: 3px; height: 7px; background: #777; border-radius: 1px; }
```
